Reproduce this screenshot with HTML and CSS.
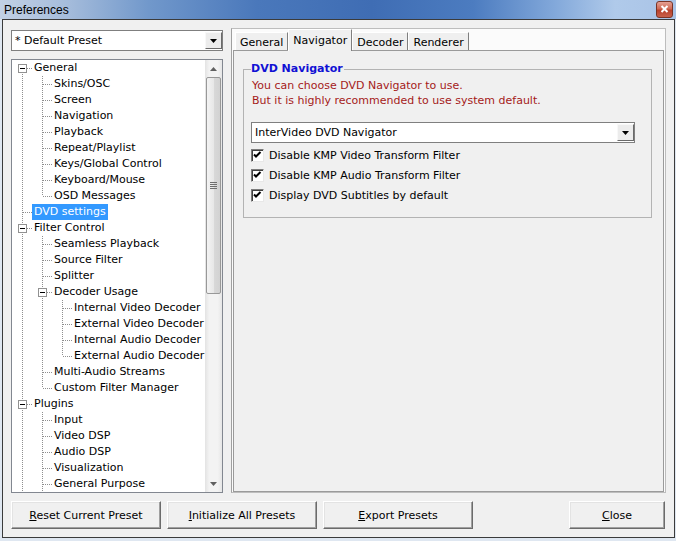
FILE: index.html
```html
<!DOCTYPE html>
<html lang="en">
<head>
    <meta charset="UTF-8">
    <title>Preferences</title>
    <link rel="stylesheet" href="styles.css">
</head>
<body>
<div class="window">
    <div class="titlebar">
        <span class="title">Preferences</span>
        <span class="close-btn">
            <svg width="9" height="8" viewBox="0 0 9 8"><path d="M1.5 1 L7.5 7 M7.5 1 L1.5 7" stroke="#fff" stroke-width="2" fill="none"/></svg>
        </span>
    </div>

    <div class="client">
        <div class="main">
            <!-- columna izquierda: preset + arbol -->
            <div class="left">
                <div class="combo">
                    <span class="combo-text">* Default Preset</span>
                    <span class="combo-btn"><svg width="7" height="4" viewBox="0 0 7 4"><path d="M0 0 H7 L3.5 4 Z" fill="#000"/></svg></span>
                </div>

                <div class="tree">
                    <div class="rows">
                        <div class="row"><span class="g g-first"><span class="exp"></span></span><span class="label">General</span></div>
                        <div class="row"><span class="g g-pipe"></span><span class="g g-tee"></span><span class="label">Skins/OSC</span></div>
                        <div class="row"><span class="g g-pipe"></span><span class="g g-tee"></span><span class="label">Screen</span></div>
                        <div class="row"><span class="g g-pipe"></span><span class="g g-tee"></span><span class="label">Navigation</span></div>
                        <div class="row"><span class="g g-pipe"></span><span class="g g-tee"></span><span class="label">Playback</span></div>
                        <div class="row"><span class="g g-pipe"></span><span class="g g-tee"></span><span class="label">Repeat/Playlist</span></div>
                        <div class="row"><span class="g g-pipe"></span><span class="g g-tee"></span><span class="label">Keys/Global Control</span></div>
                        <div class="row"><span class="g g-pipe"></span><span class="g g-tee"></span><span class="label">Keyboard/Mouse</span></div>
                        <div class="row"><span class="g g-pipe"></span><span class="g g-elbow"></span><span class="label">OSD Messages</span></div>
                        <div class="row"><span class="g g-tee"></span><span class="label sel">DVD settings</span></div>
                        <div class="row"><span class="g g-tee"><span class="exp"></span></span><span class="label">Filter Control</span></div>
                        <div class="row"><span class="g g-pipe"></span><span class="g g-tee"></span><span class="label">Seamless Playback</span></div>
                        <div class="row"><span class="g g-pipe"></span><span class="g g-tee"></span><span class="label">Source Filter</span></div>
                        <div class="row"><span class="g g-pipe"></span><span class="g g-tee"></span><span class="label">Splitter</span></div>
                        <div class="row"><span class="g g-pipe"></span><span class="g g-tee"><span class="exp"></span></span><span class="label">Decoder Usage</span></div>
                        <div class="row"><span class="g g-pipe"></span><span class="g g-pipe"></span><span class="g g-tee"></span><span class="label">Internal Video Decoder</span></div>
                        <div class="row"><span class="g g-pipe"></span><span class="g g-pipe"></span><span class="g g-tee"></span><span class="label">External Video Decoder</span></div>
                        <div class="row"><span class="g g-pipe"></span><span class="g g-pipe"></span><span class="g g-tee"></span><span class="label">Internal Audio Decoder</span></div>
                        <div class="row"><span class="g g-pipe"></span><span class="g g-pipe"></span><span class="g g-elbow"></span><span class="label">External Audio Decoder</span></div>
                        <div class="row"><span class="g g-pipe"></span><span class="g g-tee"></span><span class="label">Multi-Audio Streams</span></div>
                        <div class="row"><span class="g g-pipe"></span><span class="g g-elbow"></span><span class="label">Custom Filter Manager</span></div>
                        <div class="row"><span class="g g-tee"><span class="exp"></span></span><span class="label">Plugins</span></div>
                        <div class="row"><span class="g g-pipe"></span><span class="g g-tee"></span><span class="label">Input</span></div>
                        <div class="row"><span class="g g-pipe"></span><span class="g g-tee"></span><span class="label">Video DSP</span></div>
                        <div class="row"><span class="g g-pipe"></span><span class="g g-tee"></span><span class="label">Audio DSP</span></div>
                        <div class="row"><span class="g g-pipe"></span><span class="g g-tee"></span><span class="label">Visualization</span></div>
                        <div class="row"><span class="g g-pipe"></span><span class="g g-tee"></span><span class="label">General Purpose</span></div>
                    </div>

                    <div class="vscroll">
                        <div class="sb-btn"><svg width="7" height="4" viewBox="0 0 7 4"><path d="M0 4 H7 L3.5 0 Z" fill="#606060"/></svg></div>
                        <div class="sb-track">
                            <div class="sb-thumb">
                                <svg width="7" height="8" viewBox="0 0 7 8"><path d="M0 0.5 H7 M0 2.5 H7 M0 4.5 H7 M0 6.5 H7" stroke="#6f6f6f" stroke-width="1"/></svg>
                            </div>
                        </div>
                        <div class="sb-btn"><svg width="7" height="4" viewBox="0 0 7 4"><path d="M0 0 H7 L3.5 4 Z" fill="#606060"/></svg></div>
                    </div>
                </div>
            </div>

            <!-- panel de pestañas -->
            <div class="panel">
                <div class="tabs">
                    <div class="tab">General</div>
                    <div class="tab active">Navigator</div>
                    <div class="tab">Decoder</div>
                    <div class="tab">Renderer</div>
                </div>
                <div class="page">
                    <fieldset class="group">
                        <legend>DVD Navigator</legend>
                        <div class="note">You can choose DVD Navigator to use.</div>
                        <div class="note">But it is highly recommended to use system default.</div>
                        <div class="combo nav-combo">
                            <span class="combo-text">InterVideo DVD Navigator</span>
                            <span class="combo-btn"><svg width="7" height="4" viewBox="0 0 7 4"><path d="M0 0 H7 L3.5 4 Z" fill="#000"/></svg></span>
                        </div>
                        <div class="check-list">
                            <div class="check-row"><span class="checkbox"><svg width="11" height="11" viewBox="0 0 11 11"><path d="M2 4.5 L4 6.5 L8.5 2" stroke="#000" stroke-width="2" fill="none"/></svg></span><span>Disable KMP Video Transform Filter</span></div>
                            <div class="check-row"><span class="checkbox"><svg width="11" height="11" viewBox="0 0 11 11"><path d="M2 4.5 L4 6.5 L8.5 2" stroke="#000" stroke-width="2" fill="none"/></svg></span><span>Disable KMP Audio Transform Filter</span></div>
                            <div class="check-row"><span class="checkbox"><svg width="11" height="11" viewBox="0 0 11 11"><path d="M2 4.5 L4 6.5 L8.5 2" stroke="#000" stroke-width="2" fill="none"/></svg></span><span>Display DVD Subtitles by default</span></div>
                        </div>
                    </fieldset>
                </div>
            </div>
        </div>

        <div class="buttons">
            <button class="btn"><u>R</u>eset Current Preset</button>
            <button class="btn"><u>I</u>nitialize All Presets</button>
            <button class="btn"><u>E</u>xport Presets</button>
            <button class="btn btn-close"><u>C</u>lose</button>
        </div>
    </div>
</div>
</body>
</html>
```

FILE: styles.css
```css
/* Estilos generales */
:root {
    --dot-v: repeating-linear-gradient(to bottom, #8f8f8f 0 1px, transparent 1px 2px);
    --dot-h: repeating-linear-gradient(to right, #8f8f8f 0 1px, transparent 1px 2px);
}
body {
    margin: 0;
    font-family: "DejaVu Sans", "Liberation Sans", sans-serif;
    font-size: 11px;
    color: #000000;
}
.window {
    width: 676px;
    height: 541px;
    background-color: #dfe7f1;
    display: flex;
    flex-direction: column;
}

/* Barra de titulo */
.titlebar {
    height: 19px;
    flex: none;
    display: flex;
    align-items: center;
    justify-content: space-between;
    padding: 0 3px 0 4px;
    background: linear-gradient(to right, #c2d1e5 0%, #a5bcdb 10%, #7198cb 22%, #4a78bb 38%, #3f6db4 55%, #4c7cc0 70%, #82a8da 82%, #b0caea 91%, #a9c3e6 100%);
}
.title {
    font-family: "Liberation Sans", sans-serif;
    font-size: 12px;
}
.close-btn {
    width: 15px;
    height: 15px;
    margin-top: -1px;
    border: 1px solid #7a3426;
    border-radius: 3px;
    background: linear-gradient(#e5a093, #cf6a55 45%, #b8402a 55%, #c9604a);
    display: flex;
    align-items: center;
    justify-content: center;
}

/* Area cliente */
.client {
    flex: 1;
    margin: 0 1px 3px 2px;
    border: 1px solid #3b3b3b;
    background-color: #f0f0f0;
    padding: 8px;
    display: flex;
    flex-direction: column;
    gap: 8px;
}
.main {
    height: 465px;
    display: flex;
    gap: 8px;
}
.left {
    width: 212px;
    flex: none;
    padding-top: 2px;
    display: flex;
    flex-direction: column;
    gap: 8px;
}

/* Combo box */
.combo {
    height: 21px;
    box-sizing: border-box;
    border: 1px solid #7f7f7f;
    background-color: #ffffff;
    display: flex;
    align-items: center;
}
.combo-text {
    flex: 1;
    padding-left: 3px;
    white-space: nowrap;
}
.combo-btn {
    width: 17px;
    height: 17px;
    box-sizing: border-box;
    border: 1px solid;
    border-color: #f8f8f8 #6a6a6a #6a6a6a #f8f8f8;
    background-color: #ececec;
    display: flex;
    align-items: center;
    justify-content: center;
}

/* Arbol */
.tree {
    height: 434px;
    box-sizing: border-box;
    border: 1px solid #828790;
    background-color: #ffffff;
    display: flex;
}
.rows {
    flex: 1;
    overflow: hidden;
}
.row {
    display: flex;
    height: 16px;
    white-space: nowrap;
}
.g {
    flex: none;
    width: 20px;
    height: 16px;
}
.g-pipe {
    background: var(--dot-v) 10px 0 / 1px 16px no-repeat;
}
.g-tee {
    background: var(--dot-h) 11px 8px / 9px 1px no-repeat, var(--dot-v) 10px 0 / 1px 16px no-repeat;
}
.g-elbow {
    background: var(--dot-h) 11px 8px / 9px 1px no-repeat, var(--dot-v) 10px 0 / 1px 8px no-repeat;
}
.g-first {
    background: var(--dot-h) 11px 8px / 9px 1px no-repeat, var(--dot-v) 10px 8px / 1px 8px no-repeat;
}
.exp {
    display: block;
    width: 9px;
    height: 9px;
    box-sizing: border-box;
    margin: 4px 0 0 6px;
    border: 1px solid #919191;
    background: linear-gradient(#000, #000) center / 5px 1px no-repeat, #ffffff;
}
.label {
    padding: 0 2px;
    line-height: 16px;
}
.label.sel {
    background-color: #3399ff;
    color: #ffffff;
}

/* Barra de desplazamiento */
.vscroll {
    width: 17px;
    flex: none;
    display: flex;
    flex-direction: column;
    background: linear-gradient(to right, #e3e3e3, #f3f3f3 25%, #f3f3f3 75%, #e6e6e6);
}
.sb-btn {
    height: 17px;
    display: flex;
    align-items: center;
    justify-content: center;
}
.sb-track {
    flex: 1;
}
.sb-thumb {
    height: 217px;
    box-sizing: border-box;
    margin: 0 1px;
    border: 1px solid #989898;
    border-radius: 2px;
    background: linear-gradient(to right, #f3f3f3, #e8e8e8 50%, #d9d9d9 51%, #d2d2d2);
    display: flex;
    align-items: center;
    justify-content: center;
}

/* Panel de pestañas */
.panel {
    flex: 1;
    box-sizing: border-box;
    border: 1px solid #bdbdbd;
    border-left-color: #a0a0a0;
    background-color: #fbfbfb;
    padding: 0 1px;
    display: flex;
    flex-direction: column;
}
.tabs {
    height: 21px;
    flex: none;
    display: flex;
    align-items: flex-end;
    padding-left: 2px;
}
.tab {
    height: 18px;
    box-sizing: border-box;
    padding: 1px 4px 0 4px;
    border: 1px solid;
    border-color: #ffffff #7f7f7f transparent #ffffff;
    border-bottom: none;
    background-color: #efefef;
    display: flex;
    align-items: center;
    white-space: nowrap;
}
.tab.active {
    height: 22px;
    margin-bottom: -1px;
    padding-top: 0;
    background-color: #f0f0f0;
    position: relative;
    z-index: 1;
}
.page {
    flex: 1;
    border: 1px solid #9a9a9a;
    background-color: #f0f0f0;
}

/* Grupo DVD Navigator */
.group {
    margin: 11px 11px 0 9px;
    padding: 2px 8px 12px 7px;
    border: 1px solid #b3b3b3;
}
.group legend {
    padding: 0 1px 0 0;
    line-height: 14px;
    font-weight: bold;
    color: #1010d4;
}
.note {
    margin-left: 1px;
    line-height: 15px;
    color: #a51a1a;
}
.nav-combo {
    width: 384px;
    margin-top: 14px;
}
.check-list {
    margin-top: 2px;
}
.check-row {
    height: 20px;
    display: flex;
    align-items: center;
    gap: 5px;
}
.checkbox {
    width: 13px;
    height: 13px;
    box-sizing: border-box;
    border: 1px solid;
    border-color: #7c7c7c #e8e8e8 #e8e8e8 #7c7c7c;
    box-shadow: inset 1px 1px 0 #404040;
    background-color: #ffffff;
    display: flex;
    align-items: center;
    justify-content: center;
}

/* Botones inferiores */
.buttons {
    height: 28px;
    flex: none;
    display: flex;
    gap: 6px;
}
.btn {
    width: 150px;
    height: 28px;
    font-family: "DejaVu Sans", "Liberation Sans", sans-serif;
    font-size: 11px;
    color: #000000;
    background-color: #f0f0f0;
    border: 1px solid;
    border-color: #ffffff #6b6b6b #6b6b6b #ffffff;
    box-shadow: inset -1px -1px 0 #a0a0a0, inset 1px 1px 0 #e3e3e3;
    padding: 0;
}
.btn-close {
    width: 96px;
    margin-left: auto;
    margin-right: 1px;
}
```
